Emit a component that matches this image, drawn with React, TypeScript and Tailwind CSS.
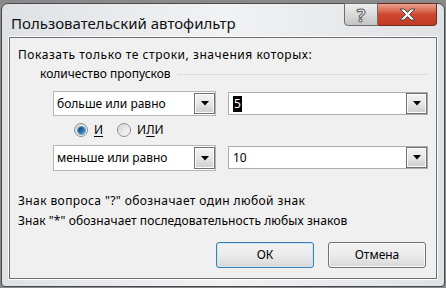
const ui = { fontFamily: '"Noto Sans", "Open Sans", sans-serif' };

function Arrow() {
  return (
    <svg width="8" height="5" viewBox="0 0 8 5">
      <path d="M0 0h8L4 4.5z" fill="#000" />
    </svg>
  );
}

function DropButton() {
  return (
    <div className="flex h-full w-[21px] shrink-0 items-center justify-center border border-[#707070] bg-gradient-to-b from-[#f4f4f4] via-[#e6e6e6] to-[#cdcdcd] shadow-[inset_0_0_0_1px_#fcfcfc]">
      <Arrow />
    </div>
  );
}

function ListCombo({ value, h }: { value: string; h: string }) {
  return (
    <div className={`flex w-[163px] items-stretch border border-[#b5b5b5] bg-white ${h}`}>
      <div className="flex flex-1 items-center pl-[3px] text-[12px] text-black">{value}</div>
      <div className="p-px pr-0">
        <DropButton />
      </div>
    </div>
  );
}

function EditCombo({ children, mt }: { children: React.ReactNode; mt: string }) {
  return (
    <div className={`flex h-[23px] w-[200px] items-stretch border border-[#abadb3] bg-white ${mt}`}>
      <div className="flex flex-1 items-center pl-[4px] text-[12px] text-black">{children}</div>
      <DropButton />
    </div>
  );
}

function Radio({ checked }: { checked?: boolean }) {
  return (
    <div className="flex h-[14px] w-[14px] items-center justify-center rounded-full border border-[#8e8f8f] bg-gradient-to-br from-[#d6d6d6] to-[#fbfbfb]">
      {checked && (
        <div className="h-[7px] w-[7px] rounded-full bg-gradient-to-br from-[#0b3a67] to-[#4aa3e0] shadow-[0_0_0_1px_#5f9ac2]" />
      )}
    </div>
  );
}

export default function App() {
  return (
    <div className="h-[288px] w-[446px] bg-[#8a8a8a] px-px pb-px pt-[3px]" style={ui}>
      <div className="flex h-full flex-col rounded-b-[4px] rounded-t-[7px] border border-[#4a4a4a] bg-gradient-to-r from-[#dfe2e5] via-[#f1f2f4] to-[#dfe2e5] px-[7px] pb-[7px]">
        {/* Title bar */}
        <div className="flex h-[33px] shrink-0 items-start justify-between">
          <div className="pl-[2px] pt-[10px] text-[15px] leading-[18px] text-[#111]">
            Пользовательский автофильтр
          </div>
          <div className="-mt-px flex">
            <div className="flex h-[23px] w-[34px] items-center justify-center rounded-bl-[4px] border border-[#6d6d6d] bg-gradient-to-b from-[#f0f0f0] via-[#dadada] to-[#c4c4c4] text-[18px] font-bold leading-none text-[#f4f4f4] [-webkit-text-stroke:1px_#5a5a5a]">
              ?
            </div>
            <div className="flex h-[23px] w-[59px] items-center justify-center rounded-br-[4px] border border-l-0 border-[#6d2a1e] bg-gradient-to-b from-[#e8a393] via-[#d0472f] to-[#c23a23]">
              <svg width="17" height="13" viewBox="0 0 17 13">
                <path
                  d="M1 1h4l3.5 3.5L12 1h4l-5.5 5.5L16 12h-4L8.5 8.5 5 12H1l5.5-5.5z"
                  fill="#f4f4f4"
                  stroke="#4a4a4a"
                  strokeWidth="1"
                />
              </svg>
            </div>
          </div>
        </div>

        {/* Client area */}
        <div className="flex flex-1 flex-col border border-[#6f6f6f] bg-[#f0f0f0] text-[12px] leading-[16px] text-black shadow-[0_0_0_1px_#ffffff]">
          <div className="mt-[9px] pl-[8px] tracking-[0.55px]">Показать только те строки, значения которых:</div>
          <div className="mt-[3px] flex items-center pl-[30px] pr-[8px]">
            <span>количество пропусков</span>
            <div className="ml-[6px] h-px flex-1 bg-[#d5dfe5]" />
          </div>

          <div className="mt-[9px] flex items-start gap-[12px] pl-[43px]">
            <ListCombo value="больше или равно" h="h-[25px]" />
            <EditCombo mt="mt-px">
              <span className="bg-black px-px text-white">5</span>
            </EditCombo>
          </div>

          <div className="mt-[6px] flex h-[16px] items-center pl-[64px]">
            <Radio checked />
            <span className="ml-[6px] underline underline-offset-2">И</span>
            <div className="ml-[14px]">
              <Radio />
            </div>
            <span className="ml-[6px]">
              И<span className="underline underline-offset-2">Л</span>И
            </span>
          </div>

          <div className="mt-[7px] flex items-start gap-[12px] pl-[43px]">
            <ListCombo value="меньше или равно" h="h-[26px]" />
            <EditCombo mt="mt-px">10</EditCombo>
          </div>

          <div className="mt-[22px] pl-[8px] tracking-[0.4px]">Знак вопроса "?" обозначает один любой знак</div>
          <div className="mt-[4px] pl-[8px] tracking-[0.08px]">Знак "*" обозначает последовательность любых знаков</div>

          <div className="mt-[13px] flex justify-end gap-[14px] pr-[10px]">
            <button className="h-[26px] w-[98px] rounded-[3px] border border-[#3c7fb1] bg-gradient-to-b from-[#f2f2f2] via-[#ebebeb] to-[#d8d8d8] text-[12px] shadow-[inset_0_0_0_1px_#c9e7f8]">
              ОК
            </button>
            <button className="h-[26px] w-[98px] rounded-[3px] border border-[#707070] bg-gradient-to-b from-[#f2f2f2] via-[#ebebeb] to-[#d8d8d8] text-[12px] shadow-[inset_0_0_0_1px_#fbfbfb]">
              Отмена
            </button>
          </div>
        </div>
      </div>
    </div>
  );
}
